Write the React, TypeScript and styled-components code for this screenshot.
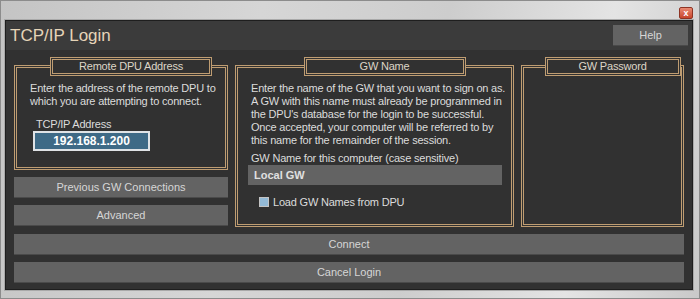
import styled, { createGlobalStyle } from "styled-components";

const GlobalStyle = createGlobalStyle`
  html, body {
    margin: 0;
    padding: 0;
  }
  body {
    width: 700px;
    height: 299px;
    overflow: hidden;
    background: #d4d4d4;
    font-family: "Liberation Sans", Arial, sans-serif;
  }
`;

const tan = "#bf9d72";

const Window = styled.div`
  width: 700px;
  height: 299px;
  box-sizing: border-box;
  display: flex;
  flex-direction: column;
  border: 1px solid #8c8c8c;
  background: linear-gradient(
    100deg,
    #c4c4c4 0%,
    #d6d6d6 35%,
    #cdcdcd 60%,
    #e4e4e4 82%,
    #c9c9c9 100%
  );
  padding: 0 6px 8px 4px;
`;

const TitleBar = styled.div`
  height: 20px;
  display: flex;
  align-items: center;
  justify-content: flex-end;
`;

const CloseButton = styled.div`
  width: 14px;
  height: 12px;
  box-sizing: border-box;
  margin-top: 4px;
  border: 1px solid #8e3424;
  border-radius: 2px;
  background: linear-gradient(#e98a73, #c8452b);
  color: #fff;
  font-size: 9px;
  font-weight: bold;
  line-height: 10px;
  text-align: center;
`;

const Panel = styled.div`
  flex: 1;
  display: flex;
  flex-direction: column;
  border: 1px solid #1e1e1e;
  box-shadow: 0 0 0 1px #a9a9a9;
  background: #313131;
`;

const Header = styled.div`
  height: 29px;
  display: flex;
  align-items: center;
  justify-content: space-between;
  padding: 0 4px;
  background: #3b3b3b;
`;

const Title = styled.h1`
  margin: 0;
  font-size: 17px;
  font-weight: normal;
  color: #e6d4b8;
`;

const Button = styled.div<{ $width?: number }>`
  width: ${(p) => (p.$width ? `${p.$width}px` : "auto")};
  height: 21px;
  box-sizing: border-box;
  display: flex;
  align-items: center;
  justify-content: center;
  background: #636363;
  color: #d6d6d6;
  font-size: 11px;
  border-bottom: 1px solid #4a4a4a;
`;

const Body = styled.div`
  flex: 1;
  display: flex;
  flex-direction: column;
  gap: 7px;
  padding: 7px 8px 6px;
`;

const TopRow = styled.div`
  height: 170px;
  display: grid;
  grid-template-columns: 214px 279px 1fr;
  column-gap: 7px;
`;

const Column = styled.div`
  display: flex;
  flex-direction: column;
  gap: 7px;
`;

const Group = styled.fieldset<{ $height: number }>`
  margin: 0;
  padding: 0;
  min-width: 0;
  height: ${(p) => p.$height}px;
  box-sizing: border-box;
  border: 3px double ${tan};
`;

const Legend = styled.legend<{ $width: number }>`
  width: ${(p) => p.$width}px;
  height: 19px;
  box-sizing: border-box;
  margin-left: 10px;
  padding: 0;
  border: 3px double ${tan};
  background: #313131;
  color: #ddd5c7;
  font-size: 11px;
  line-height: 13px;
  letter-spacing: -0.2px;
  text-align: center;
`;

const Text = styled.p`
  margin: 0;
  padding: 6px 2px 0 13px;
  color: #dcdcdc;
  font-size: 11px;
  line-height: 13px;
  letter-spacing: -0.2px;
`;

const Field = styled.div`
  margin: 10px 0 0 16px;
  display: flex;
  flex-direction: column;
`;

const FieldLabel = styled.div<{ $indent: number; $top?: number }>`
  margin-top: ${(p) => p.$top ?? 0}px;
  padding-left: ${(p) => p.$indent}px;
  color: #dcdcdc;
  font-size: 11px;
  line-height: 13px;
  letter-spacing: -0.2px;
`;

const AddressInput = styled.div`
  width: 117px;
  height: 20px;
  box-sizing: border-box;
  border: 2px solid #dfe3e6;
  background: #3e6a86;
  color: #fff;
  font-size: 12px;
  font-weight: bold;
  line-height: 16px;
  text-align: center;
`;

const NameField = styled.div`
  margin: 0 9px 0 10px;
  height: 20px;
  display: flex;
  align-items: center;
  padding-left: 6px;
  background: #636363;
  color: #e0e0e0;
  font-size: 11px;
  font-weight: bold;
`;

const CheckRow = styled.label`
  display: flex;
  align-items: center;
  gap: 4px;
  margin: 11px 0 0 21px;
  color: #dcdcdc;
  font-size: 11px;
  letter-spacing: -0.2px;
`;

const Check = styled.span`
  width: 10px;
  height: 10px;
  box-sizing: border-box;
  border: 1px solid #c4c4c4;
  background: #93bad7;
`;

export default function App() {
  return (
    <>
      <GlobalStyle />
      <Window>
        <TitleBar>
          <CloseButton>x</CloseButton>
        </TitleBar>
        <Panel>
          <Header>
            <Title>TCP/IP Login</Title>
            <Button $width={75}>Help</Button>
          </Header>
          <Body>
            <TopRow>
              <Column>
                <Group $height={113}>
                  <Legend $width={162}>Remote DPU Address</Legend>
                  <Text>
                    Enter the address of the remote DPU to which you are
                    attempting to connect.
                  </Text>
                  <Field>
                    <FieldLabel $indent={3}>TCP/IP Address</FieldLabel>
                    <AddressInput>192.168.1.200</AddressInput>
                  </Field>
                </Group>
                <Button>Previous GW Connections</Button>
                <Button>Advanced</Button>
              </Column>
              <Group $height={170}>
                <Legend $width={162}>GW Name</Legend>
                <Text>
                  Enter the name of the GW that you want to sign on as. A GW
                  with this name must already be programmed in the DPU's
                  database for the login to be successful. Once accepted, your
                  computer will be referred to by this name for the remainder
                  of the session.
                </Text>
                <FieldLabel $indent={13} $top={5}>
                  GW Name for this computer (case sensitive)
                </FieldLabel>
                <NameField>Local GW</NameField>
                <CheckRow>
                  <Check />
                  Load GW Names from DPU
                </CheckRow>
              </Group>
              <Group $height={170}>
                <Legend $width={136}>GW Password</Legend>
              </Group>
            </TopRow>
            <Button>Connect</Button>
            <Button>Cancel Login</Button>
          </Body>
        </Panel>
      </Window>
    </>
  );
}
